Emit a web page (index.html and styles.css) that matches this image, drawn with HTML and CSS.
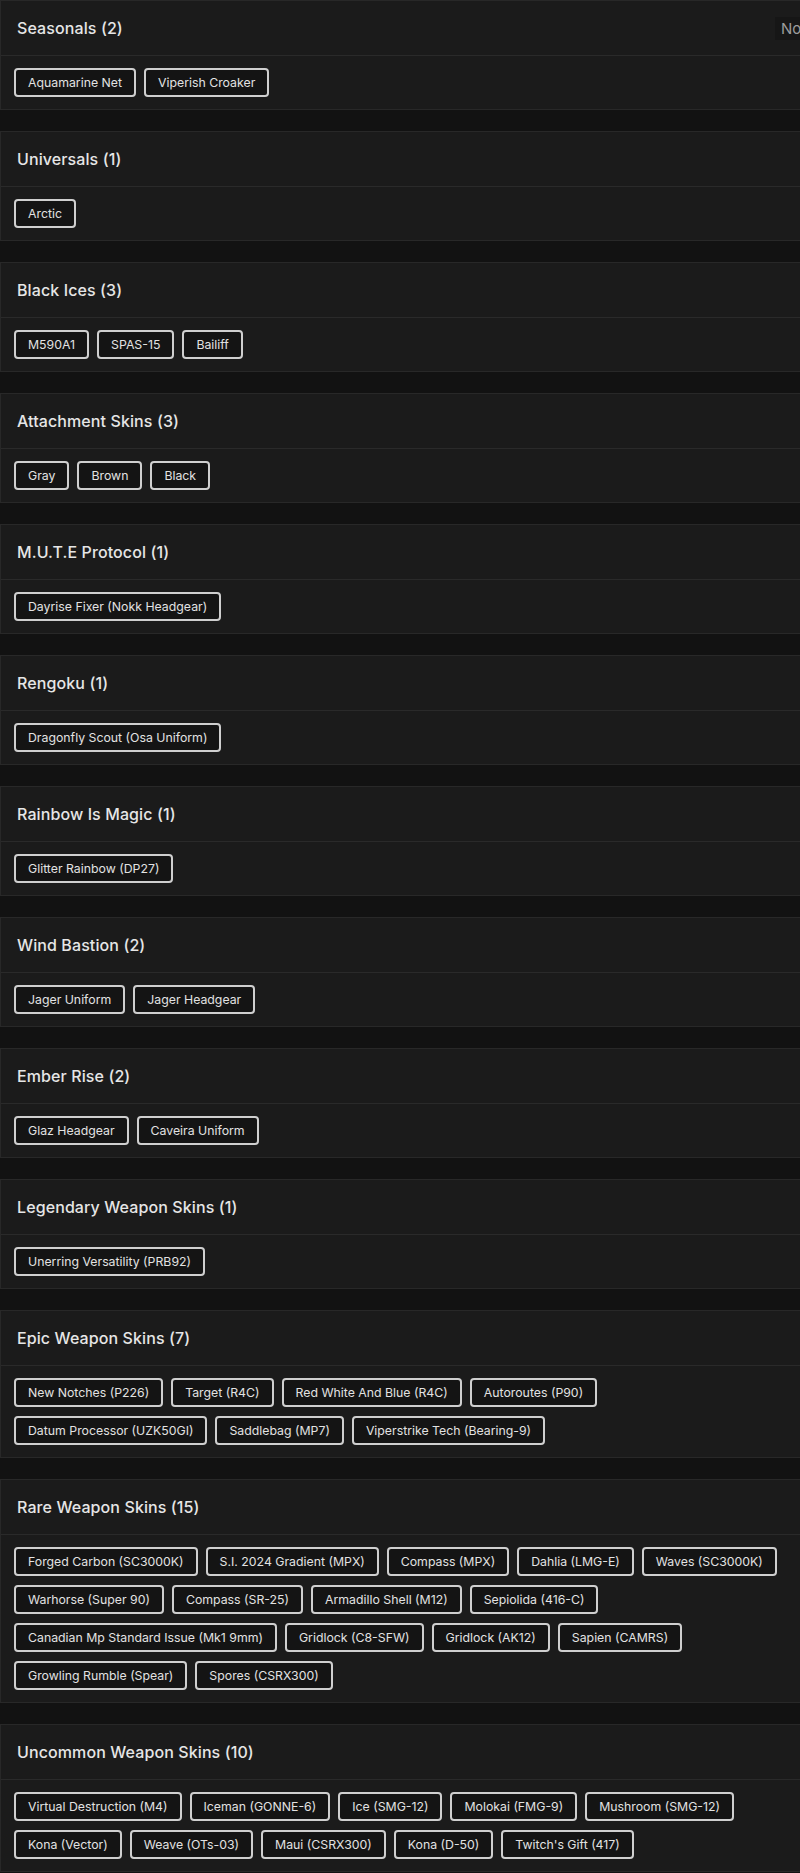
FILE: index.html
```html
<!DOCTYPE html>
<html lang="en">
<head>
<meta charset="utf-8">
<title>Skins</title>
<link rel="stylesheet" href="styles.css">
</head>
<body>
<main class="page">
  <section class="panel">
    <header class="panel-head"><h2 class="panel-title">Seasonals (2)</h2><span class="status">Not Owned</span></header>
    <div class="chips"><span class="chip">Aquamarine Net</span><span class="chip">Viperish Croaker</span></div>
  </section>
  <section class="panel">
    <header class="panel-head"><h2 class="panel-title">Universals (1)</h2></header>
    <div class="chips"><span class="chip">Arctic</span></div>
  </section>
  <section class="panel">
    <header class="panel-head"><h2 class="panel-title">Black Ices (3)</h2></header>
    <div class="chips"><span class="chip">M590A1</span><span class="chip">SPAS-15</span><span class="chip">Bailiff</span></div>
  </section>
  <section class="panel">
    <header class="panel-head"><h2 class="panel-title">Attachment Skins (3)</h2></header>
    <div class="chips"><span class="chip">Gray</span><span class="chip">Brown</span><span class="chip">Black</span></div>
  </section>
  <section class="panel">
    <header class="panel-head"><h2 class="panel-title">M.U.T.E Protocol (1)</h2></header>
    <div class="chips"><span class="chip">Dayrise Fixer (Nokk Headgear)</span></div>
  </section>
  <section class="panel">
    <header class="panel-head"><h2 class="panel-title">Rengoku (1)</h2></header>
    <div class="chips"><span class="chip">Dragonfly Scout (Osa Uniform)</span></div>
  </section>
  <section class="panel">
    <header class="panel-head"><h2 class="panel-title">Rainbow Is Magic (1)</h2></header>
    <div class="chips"><span class="chip">Glitter Rainbow (DP27)</span></div>
  </section>
  <section class="panel">
    <header class="panel-head"><h2 class="panel-title">Wind Bastion (2)</h2></header>
    <div class="chips"><span class="chip">Jager Uniform</span><span class="chip">Jager Headgear</span></div>
  </section>
  <section class="panel">
    <header class="panel-head"><h2 class="panel-title">Ember Rise (2)</h2></header>
    <div class="chips"><span class="chip">Glaz Headgear</span><span class="chip">Caveira Uniform</span></div>
  </section>
  <section class="panel">
    <header class="panel-head"><h2 class="panel-title">Legendary Weapon Skins (1)</h2></header>
    <div class="chips"><span class="chip">Unerring Versatility (PRB92)</span></div>
  </section>
  <section class="panel">
    <header class="panel-head"><h2 class="panel-title">Epic Weapon Skins (7)</h2></header>
    <div class="chips">
      <span class="chip">New Notches (P226)</span><span class="chip">Target (R4C)</span><span class="chip">Red White And Blue (R4C)</span><span class="chip">Autoroutes (P90)</span><span class="chip">Datum Processor (UZK50GI)</span><span class="chip">Saddlebag (MP7)</span><span class="chip">Viperstrike Tech (Bearing-9)</span>
    </div>
  </section>
  <section class="panel">
    <header class="panel-head"><h2 class="panel-title">Rare Weapon Skins (15)</h2></header>
    <div class="chips">
      <span class="chip">Forged Carbon (SC3000K)</span><span class="chip">S.I. 2024 Gradient (MPX)</span><span class="chip">Compass (MPX)</span><span class="chip">Dahlia (LMG-E)</span><span class="chip">Waves (SC3000K)</span><span class="chip">Warhorse (Super 90)</span><span class="chip">Compass (SR-25)</span><span class="chip">Armadillo Shell (M12)</span><span class="chip">Sepiolida (416-C)</span><span class="chip">Canadian Mp Standard Issue (Mk1 9mm)</span><span class="chip">Gridlock (C8-SFW)</span><span class="chip">Gridlock (AK12)</span><span class="chip">Sapien (CAMRS)</span><span class="chip">Growling Rumble (Spear)</span><span class="chip">Spores (CSRX300)</span>
    </div>
  </section>
  <section class="panel">
    <header class="panel-head"><h2 class="panel-title">Uncommon Weapon Skins (10)</h2></header>
    <div class="chips">
      <span class="chip">Virtual Destruction (M4)</span><span class="chip">Iceman (GONNE-6)</span><span class="chip">Ice (SMG-12)</span><span class="chip">Molokai (FMG-9)</span><span class="chip">Mushroom (SMG-12)</span><span class="chip">Kona (Vector)</span><span class="chip">Weave (OTs-03)</span><span class="chip">Maui (CSRX300)</span><span class="chip">Kona (D-50)</span><span class="chip">Twitch's Gift (417)</span>
    </div>
  </section>
</main>
</body>
</html>
```

FILE: styles.css
```css
html, body {
  margin: 0;
  padding: 0;
  background: #121212;
  overflow: hidden;
}

.page {
  display: flex;
  flex-direction: column;
  gap: 21px;
  font-family: "Inter", "Open Sans", "DejaVu Sans", sans-serif;
  color: #e4e4e4;
}

.panel {
  background: #1b1b1b;
  border: 1px solid #282828;
  border-right: none;
  overflow: hidden;
}

.panel-head {
  display: flex;
  align-items: center;
  height: 54px;
  padding: 0 16px;
  border-bottom: 1px solid #2a2a2a;
}

.panel-title {
  flex: 1;
  margin: 0;
  font-size: 16px;
  font-weight: 500;
  letter-spacing: 0.1px;
  color: #e6e6e6;
}

.status {
  margin-right: -83px;
  padding: 2px 6px;
  background: #161616;
  color: #9c9c9c;
  font-size: 15px;
  white-space: nowrap;
}

.chips {
  display: flex;
  flex-wrap: wrap;
  gap: 9px 8px;
  padding: 12px 12px 12px 13px;
}

.chip {
  box-sizing: border-box;
  height: 29px;
  padding: 0 12px;
  border: 2px solid #cfcfcf;
  border-radius: 4px;
  background: #141414;
  color: #e2e2e2;
  font-size: 12.3px;
  line-height: 25px;
  white-space: nowrap;
}
```
